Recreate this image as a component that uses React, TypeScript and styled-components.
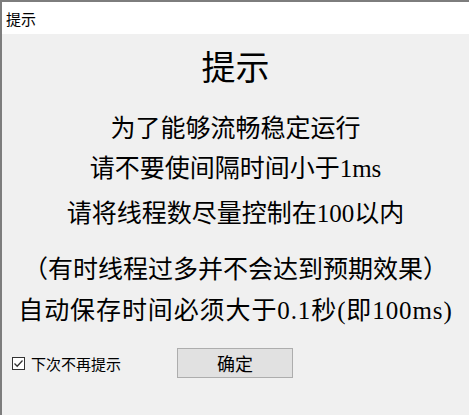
import React, { useState } from 'react';
import styled, { createGlobalStyle } from 'styled-components';

const SERIF = `"Liberation Serif", "Noto Sans CJK SC", serif`;
const SANS = `"Noto Sans CJK SC", "Liberation Sans", sans-serif`;

const GlobalStyle = createGlobalStyle`
  html, body {
    margin: 0;
    padding: 0;
    background: #f0f0f0;
  }
`;

const Window = styled.div`
  display: flex;
  flex-direction: column;
  width: 469px;
  height: 415px;
  box-sizing: border-box;
  border-top: 2px solid #7d7d7d;
  border-left: 2px solid #7d7d7d;
  background: #f0f0f0;
  overflow: hidden;
`;

const TitleBar = styled.div`
  display: flex;
  align-items: center;
  height: 32px;
  padding-left: 4px;
  background: #ffffff;
  font-family: ${SANS};
  font-size: 15px;
  color: #000;
`;

const Body = styled.div`
  display: flex;
  flex-direction: column;
  align-items: center;
  padding-top: 15px;
  font-family: ${SERIF};
  color: #000;
`;

const Heading = styled.div`
  font-size: 34px;
  line-height: 40px;
`;

type LineProps = {
  $top: number;
  $spacing?: number;
};

const Line = styled.div<LineProps>`
  margin-top: ${({ $top }) => $top}px;
  font-size: 25px;
  line-height: 30px;
  letter-spacing: ${({ $spacing = 0 }) => $spacing}px;
  white-space: nowrap;
`;

const Footer = styled.div`
  display: flex;
  align-items: center;
  margin-top: 22px;
  padding-left: 10px;
  font-family: ${SANS};
`;

const CheckLabel = styled.label`
  display: flex;
  align-items: center;
  gap: 6px;
  font-size: 15px;
  color: #000;
  cursor: pointer;
`;

const HiddenInput = styled.input`
  display: none;
`;

const Button = styled.button`
  width: 116px;
  height: 30px;
  margin-left: 56px;
  padding: 0;
  border: 1px solid #adadad;
  background: #e1e1e1;
  font-family: ${SANS};
  font-size: 18px;
  color: #000;
`;

const Box = ({ checked }: { checked: boolean }) => (
  <svg width="13" height="13" viewBox="0 0 13 13">
    <rect x="0.5" y="0.5" width="12" height="12" fill="#fff" stroke="#333" />
    {checked && <path d="M2.5 6.5 L5.2 9.2 L10.5 3.5" fill="none" stroke="#333" strokeWidth="1.3" />}
  </svg>
);

export default function App() {
  const [checked, setChecked] = useState(true);

  return (
    <>
      <GlobalStyle />
      <Window>
        <TitleBar>提示</TitleBar>
        <Body>
          <Heading>提示</Heading>
          <Line $top={25}>为了能够流畅稳定运行</Line>
          <Line $top={10}>请不要使间隔时间小于1ms</Line>
          <Line $top={15}>请将线程数尽量控制在100以内</Line>
          <Line $top={26}>（有时线程过多并不会达到预期效果）</Line>
          <Line $top={11} $spacing={0.9}>自动保存时间必须大于0.1秒(即100ms)</Line>
        </Body>
        <Footer>
          <CheckLabel>
            <HiddenInput type="checkbox" checked={checked} onChange={() => setChecked(!checked)} />
            <Box checked={checked} />
            下次不再提示
          </CheckLabel>
          <Button>确定</Button>
        </Footer>
      </Window>
    </>
  );
}
